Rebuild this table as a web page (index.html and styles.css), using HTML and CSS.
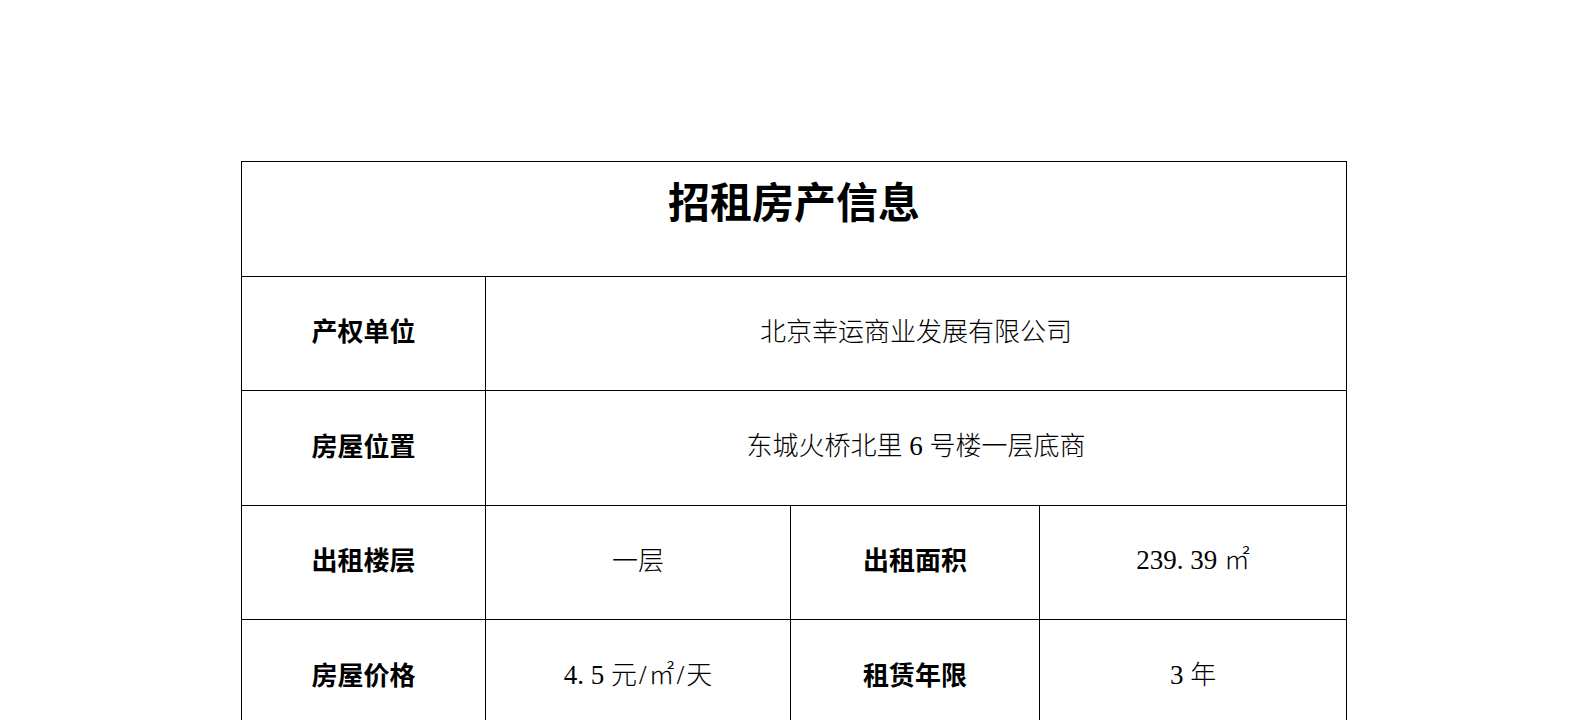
FILE: index.html
```html
<!DOCTYPE html>
<html lang="zh-CN">
<head>
<meta charset="utf-8">
<title>招租房产信息</title>
<link rel="stylesheet" href="styles.css">
</head>
<body>
<div class="page">
  <table class="info">
    <colgroup>
      <col class="c1"><col class="c2"><col class="c3"><col class="c4">
    </colgroup>
    <tr class="row">
      <td class="title" colspan="4">招租房产信息</td>
    </tr>
    <tr class="row">
      <td class="label">产权单位</td>
      <td class="value" colspan="3">北京幸运商业发展有限公司</td>
    </tr>
    <tr class="row">
      <td class="label">房屋位置</td>
      <td class="value" colspan="3">东城火桥北里<span class="num"> 6 </span>号楼一层底商</td>
    </tr>
    <tr class="row">
      <td class="label">出租楼层</td>
      <td class="value">一层</td>
      <td class="label">出租面积</td>
      <td class="value"><span class="num">239. 39 </span>㎡</td>
    </tr>
    <tr class="row">
      <td class="label">房屋价格</td>
      <td class="value"><span class="num">4. 5 </span>元<span class="num slash">/</span>㎡<span class="num slash">/</span>天</td>
      <td class="label">租赁年限</td>
      <td class="value"><span class="num">3 </span>年</td>
    </tr>
  </table>
</div>
</body>
</html>
```

FILE: styles.css
```css
html, body {
  margin: 0;
  padding: 0;
  background: #ffffff;
}

.page {
  padding: 161px 0 0 241px;
}

.info {
  border-collapse: collapse;
  table-layout: fixed;
  width: 1106px;
  color: #000;
  font-family: "Noto Sans CJK SC", "Noto Sans CJK JP", sans-serif;
}

.c1 { width: 244px; }
.c2 { width: 305px; }
.c3 { width: 249px; }
.c4 { width: 307px; }

.info td {
  border: 1px solid #000;
  text-align: center;
  vertical-align: middle;
  padding: 0 0 6px 0;
  line-height: 34px;
}

.row {
  height: 114.5px;
}

.title {
  font-size: 42px;
  font-weight: 700;
  vertical-align: top !important;
  padding-top: 10px !important;
  line-height: 56px !important;
}

.label {
  font-size: 26px;
  font-weight: 700;
}

.value {
  font-size: 26px;
  font-weight: 300;
}

.num {
  font-family: "Liberation Serif", "DejaVu Serif", serif;
  font-size: 27px;
  font-weight: 400;
}

.slash {
  padding: 0 2px;
}
```
